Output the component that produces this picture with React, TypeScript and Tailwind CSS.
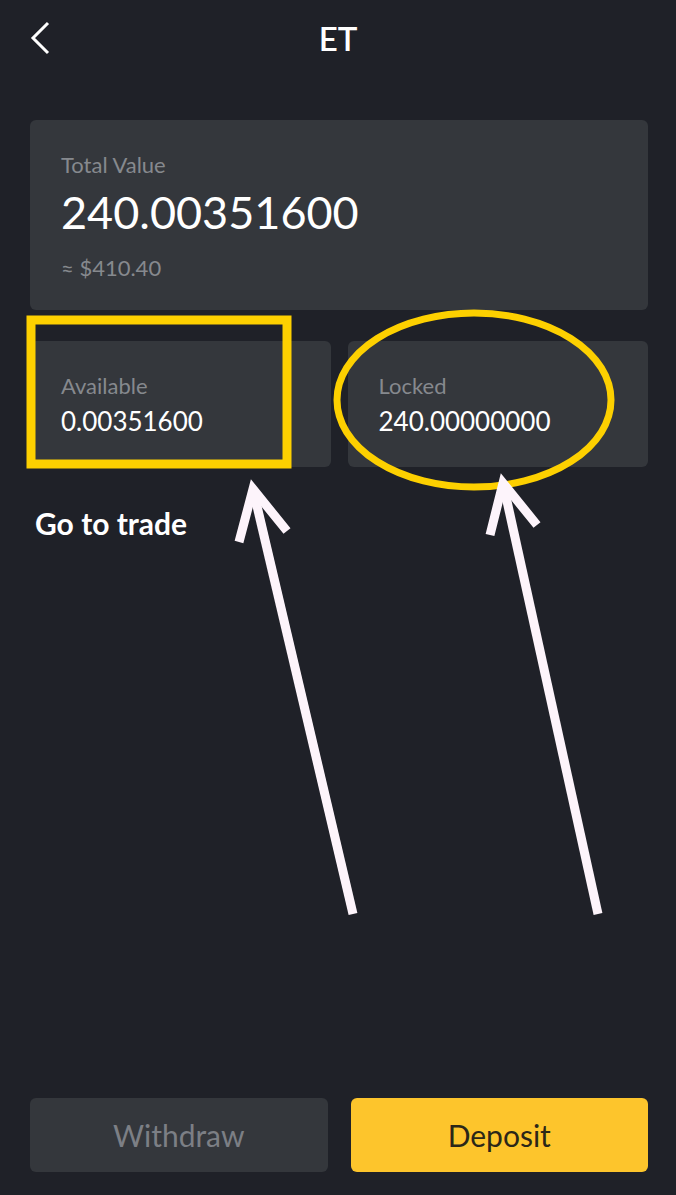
import React from 'react'

function BalanceCard({ label, value }: { label: string; value: string }) {
  return (
    <div className="flex-1 h-[126px] rounded-md bg-[#34373c] pl-[31px] pt-[32px]">
      <div className="text-[22px] leading-[26px] text-[#86898e]">{label}</div>
      <div className="mt-[7px] text-[26px] leading-[30px] text-white">{value}</div>
    </div>
  )
}

function Annotations() {
  // hand-drawn markup over the screenshot
  return (
    <svg
      className="absolute inset-0 pointer-events-none"
      width="676"
      height="1195"
      viewBox="0 0 676 1195"
      fill="none"
    >
      <rect x="31" y="320" width="256" height="144" stroke="#fdd000" strokeWidth="9" />
      <ellipse cx="474" cy="400" rx="137" ry="87" stroke="#fdd000" strokeWidth="7" />
      <g stroke="#fdf4fb" strokeWidth="9" strokeLinecap="butt" strokeLinejoin="miter">
        <path d="M353 914 L253 489" />
        <path d="M239 542 L253 489 L287 531" />
        <path d="M598 914 L503 483" />
        <path d="M490 535 L503 483 L537 525" />
      </g>
    </svg>
  )
}

export default function App() {
  return (
    <div
      className="relative w-[676px] h-[1195px] bg-[#1f2128] flex flex-col overflow-hidden"
      style={{ fontFamily: 'Lato, "Noto Sans", sans-serif' }}
    >
      {/* Header */}
      <div className="relative h-[76px] flex items-center justify-center shrink-0">
        <button className="absolute left-[27px] top-[20px] w-[26px] h-[36px] flex items-center justify-center">
          <svg width="22" height="34" viewBox="0 0 22 34" fill="none">
            <path d="M19 2 L4 17 L19 32" stroke="white" strokeWidth="3" />
          </svg>
        </button>
        <h1 className="text-[33px] leading-[40px] font-semibold text-white">ET</h1>
      </div>

      <div className="pl-[30px] pr-[28px] mt-[44px]">
        {/* Total value */}
        <div className="h-[190px] rounded-md bg-[#34373c] pl-[31px] pt-[32px]">
          <div className="text-[22px] leading-[26px] text-[#86898e]">Total Value</div>
          <div className="mt-[9px] text-[45px] leading-[50px] text-white">240.00351600</div>
          <div className="mt-[18px] text-[22px] leading-[26px] text-[#86898e]">≈ $410.40</div>
        </div>

        <div className="mt-[31px] flex gap-[17px]">
          <BalanceCard label="Available" value="0.00351600" />
          <BalanceCard label="Locked" value="240.00000000" />
        </div>

        <div className="mt-[38px] pl-[5px] text-[30px] leading-[36px] font-bold text-white">Go to trade</div>
      </div>

      <div className="flex-1" />

      {/* Actions */}
      <div className="pl-[30px] pr-[28px] pb-[23px] flex gap-[23px]">
        <button className="flex-1 h-[74px] rounded-md bg-[#34373c] text-[30px] text-[#7c7f85]">Withdraw</button>
        <button className="flex-1 h-[74px] rounded-md bg-[#fdc52c] text-[30px] text-[#2b2718]">Deposit</button>
      </div>

      <Annotations />
    </div>
  )
}
